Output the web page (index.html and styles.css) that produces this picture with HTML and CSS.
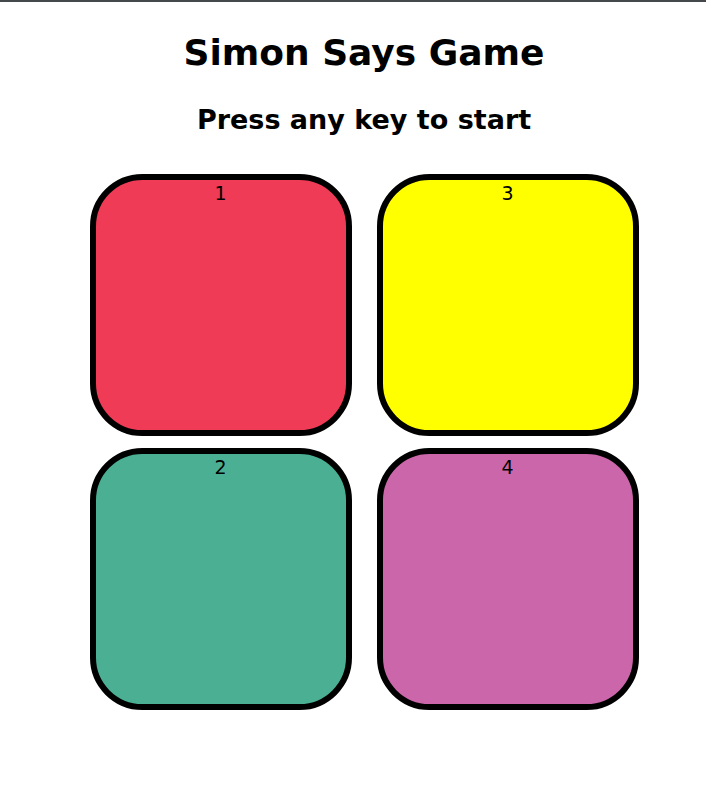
FILE: index.html
```html
<!DOCTYPE html>
<html lang="en">
<head>
    <meta charset="UTF-8">
    <meta name="viewport" content="width=device-width, initial-scale=1.0">
    <title>Simon Says Game</title>
    <link rel="stylesheet" href="styles.css">
</head>
<body>

    <h1>Simon Says Game</h1>
    <h2 id="level-title">Press any key to start</h2>

    <div class="btn-container">
        <div class="line-one">
            <div class="btn red" id="red">1</div>
            <div class="btn yellow" id="yellow">3</div>
        </div>
        <div class="line-two">
            <div class="btn green" id="green">2</div>
            <div class="btn purple" id="purple">4</div>
        </div>
    </div>

</body>
</html>
```
FILE: styles.css
```css
body {
    margin: 0;
    padding-left: 22px;
    border-top: 2px solid #45484b;
    text-align: center;
    font-family: "DejaVu Sans", Verdana, sans-serif;
    color: #000;
}

h1 {
    font-size: 36px;
    margin: 30px 0 0;
}

h2 {
    font-size: 27px;
    margin: 31px 0 0;
}

.btn-container {
    margin-top: 39px;
    display: flex;
    flex-direction: column;
    align-items: center;
    gap: 12px;
}

.line-one,
.line-two {
    display: flex;
    gap: 25px;
}

.btn {
    width: 250px;
    height: 248px;
    padding-top: 2px;
    border: 6px solid black;
    border-radius: 20%;
    font-size: 19px;
    font-family: "DejaVu Sans", sans-serif;
}

.red {
    background-color: #ef3b55;
}

.yellow {
    background-color: #ffff00;
}

.green {
    background-color: #4bb093;
}

.purple {
    background-color: #cc66aa;
}
```
